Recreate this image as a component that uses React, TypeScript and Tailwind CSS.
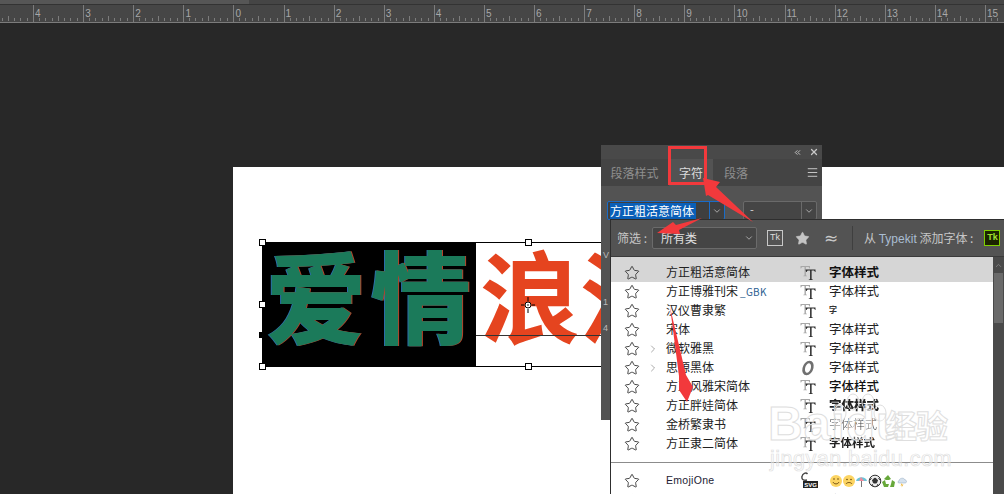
import { Star, ChevronDown, ChevronRight, ChevronUp, X, ChevronsLeft, Menu } from "lucide-react";

const cjk = "font-['Noto_Sans_CJK_SC','Noto_Sans',sans-serif]";
const rulerLabels = ["", "4", "3", "2", "1", "0", "1", "2", "3", "4", "5", "6", "7", "8", "9", "10", "11", "12", "13", "14", "15"];

const fonts = [
  { name: "方正粗活意简体", sample: "字体样式", cls: "text-[12.5px] font-bold text-[#111]" },
  { name: "方正博雅刊宋", tag: "_GBK", sample: "字体样式", cls: "text-[12.5px] text-[#222]" },
  { name: "汉仪曹隶繁", sample: "字", cls: "text-[8px] font-bold text-[#333]" },
  { name: "宋体", sample: "字体样式", cls: "text-[12.5px] text-[#222]" },
  { name: "微软雅黑", sample: "字体样式", cls: "text-[12.5px] text-[#222]", more: true },
  { name: "思源黑体", sample: "字体样式", cls: "text-[12.5px] text-[#222]", more: true, icon: "o" },
  { name: "方正风雅宋简体", sample: "字体样式", cls: "text-[12.5px] font-medium text-[#111]" },
  { name: "方正胖娃简体", sample: "字体样式", cls: "text-[12.5px] font-black text-[#222] blur-[0.7px]" },
  { name: "金桥繁隶书", sample: "字体样式", cls: "text-[12px] font-light text-[#444] blur-[0.4px]" },
  { name: "方正隶二简体", sample: "字体样式", cls: "text-[11.5px] font-bold text-[#222] blur-[0.3px]" },
];

const RulerCell = ({ label }: { label: string }) => (
  <div className="relative h-full w-[50.1px] shrink-0">
    <svg width="50" height="17" className="absolute left-0 top-0">
      <line x1="0.5" y1="0" x2="0.5" y2="17" stroke="#7c7c7c" />
      {[6, 12, 19, 25, 31, 37, 44].map((x) => (
        <line key={x} x1={x + 0.5} y1={x === 25 ? 11 : 13} x2={x + 0.5} y2="16" stroke="#7c7c7c" />
      ))}
    </svg>
    <span className="absolute left-[2px] top-[3px] font-['Liberation_Sans',sans-serif] text-[10px] leading-[12px] text-[#a8a8a8]">
      {label}
    </span>
  </div>
);

const TtIcon = () => (
  <svg width="16" height="16" viewBox="0 0 16 16" className="shrink-0">
    <path d="M0.5 1h9.500v2.500h-.5c-.2-.9-.6-1.500-1.800-1.500H5.900v8.500l1.100.3v.4H3.300v-.4l1.200-.3V2H3c-1.200 0-1.700.6-1.900 1.500H.5z" fill="#a8a8a8" />
    <path d="M5.500 4.500h10v2.500H15c-.2-.9-.6-1.500-1.800-1.500h-1.600v8.800l1.200.3v.4H8.800v-.4l1.300-.3V5.500H8.500c-1.200 0-1.700.6-1.900 1.500h-.6z" fill="#2a2a2a" />
  </svg>
);

const OIcon = () => (
  <svg width="16" height="16" viewBox="0 0 16 16" className="shrink-0">
    <ellipse cx="8" cy="8" rx="4.200" ry="6" transform="skewX(-12) translate(1.700 0)" fill="none" stroke="#707070" strokeWidth="2.600" />
  </svg>
);

const SvgIcon = () => (
  <svg width="18" height="17" viewBox="0 0 18 17" className="shrink-0">
    <path d="M7 8C3 9 1.500 7 2 4.500 2.500 1.500 6 0 7.500 2" fill="none" stroke="#444" strokeWidth="1.400" />
    <rect x="3" y="9" width="15" height="7" fill="#222" />
    <text x="10.500" y="15" textAnchor="middle" fontSize="6" fontWeight="700" fill="#fff" fontFamily="Liberation Sans, sans-serif">SVG</text>
  </svg>
);

const Emojis = () => (
  <svg width="78" height="14" viewBox="0 0 78 14">
    <circle cx="7" cy="7" r="6" fill="#fcd462" />
    <path d="M4 8c1 2.500 5 2.500 6 0" fill="none" stroke="#6b4a10" strokeWidth="0.900" />
    <circle cx="5" cy="5" r="0.800" fill="#6b4a10" />
    <circle cx="9" cy="5" r="0.800" fill="#6b4a10" />
    <circle cx="20" cy="7" r="6" fill="#fcd462" />
    <path d="M17 10c1-2 5-2 6 0" fill="none" stroke="#6b4a10" strokeWidth="0.900" />
    <circle cx="18" cy="5.500" r="0.800" fill="#6b4a10" />
    <circle cx="22" cy="5.500" r="0.800" fill="#6b4a10" />
    <path d="M27 7c1-5 10-5 11 0z" fill="#6cc4d8" />
    <path d="M32 3l3 4h-5z" fill="#f08a9c" />
    <path d="M32.500 7v6" stroke="#777" />
    <circle cx="46" cy="7" r="5.800" fill="#eee" stroke="#333" strokeWidth="1" />
    <path d="M46 4l2.500 2-1 3h-3l-1-3zM41 6l1.500-2M51 6l-1.500-2M44 12l-1-2M48 12l1-2" fill="#333" stroke="#333" />
    <path d="M59 1l3 4-2 1h-3l-2-1zM53 8l3-2 1 4 3 0-1 3h-4zM66 8l-3-2-1 4-1 3h4z" fill="#67a83a" />
    <path d="M70 7c0-3 5-4 6-1 2 0 2 3 0 3h-6c-1.500 0-1.500-2 0-2z" fill="#d6e2ee" stroke="#8fa6bf" strokeWidth="0.500" />
    <path d="M73 9l-1.500 2.500h1.500l-.5 2 2-3h-1.500z" fill="#f0b83c" />
  </svg>
);

const FontRow = ({ font, first }: { font: (typeof fonts)[number]; first: boolean }) => (
  <div className={`flex items-center ${first ? "h-[25px] bg-[#d6d6d6] pt-[6px]" : "h-[19px]"}`}>
    <Star size={16} strokeWidth={1.4} className="ml-[13px] shrink-0 text-[#3a3a3a]" />
    <div className="flex w-[26px] shrink-0 justify-end pr-[7px]">
      {font.more && <ChevronRight size={12} strokeWidth={1} className="text-[#555]" />}
    </div>
    <div className="-mt-[2px] w-[134px] shrink-0 text-[12px] leading-[19px] text-[#222]">
      {font.name}
      {font.tag && <span className="ml-[2px] text-[10px] tracking-[0.3px] text-[#2a5d8f]">{font.tag}</span>}
    </div>
    <div className="flex w-[29px] shrink-0">{font.icon === "o" ? <OIcon /> : <TtIcon />}</div>
    <div className={`-mt-[2px] leading-[19px] ${font.cls}`}>{font.sample}</div>
  </div>
);

export default function App() {
  return (
    <div className={`relative flex h-[494px] w-[1004px] flex-col overflow-hidden bg-[#282828] ${cjk}`}>
      <div className="flex h-[5px] shrink-0 border-b border-[#333]">
        <div className="w-[249px] bg-[#565656]" />
        <div className="flex-1 bg-[#454545]" />
      </div>
      <div className="flex h-[18px] shrink-0 overflow-hidden border-b border-[#7c7c7c] bg-[#464646] pl-0">
        <div className="-ml-[17px] flex">
          {rulerLabels.map((label, i) => (
            <RulerCell key={i} label={label} />
          ))}
        </div>
      </div>

      {/* document canvas */}
      <div className="mt-[144px] ml-[233px] flex-1 bg-white" />

      <div className="absolute left-[262px] top-[242px] flex h-[125px] w-[339px] overflow-hidden border-y border-black">
        <div className="h-full w-[214px] shrink-0 whitespace-nowrap bg-black pl-[4px] text-[100px] font-black leading-[100px] text-[#1b7a5a] [text-shadow:1px_0_#b5432a,-1px_0_#2b6ea8]">
          <span className="mr-[5px]">爱</span>
          <span>情</span>
        </div>
        <div className="h-full flex-1 whitespace-nowrap pl-[4px] text-[100px] font-bold leading-[100px] text-[#e5441f]">
          浪漫
        </div>
      </div>
      <div className="absolute left-[476px] top-[335px] h-px w-[125px] bg-[#333]" />
      {[
        [259, 239],
        [525, 239],
        [259, 301],
        [259, 363],
        [525, 363],
      ].map(([x, y]) => (
        <div
          key={`${x}-${y}`}
          className="absolute h-[7px] w-[7px] border border-black bg-white"
          style={{ left: x, top: y }}
        />
      ))}
      <div className="absolute left-[259px] top-[332px] h-[6px] w-[4px] bg-black" />
      <svg width="16" height="16" viewBox="0 0 16 16" className="absolute left-[520px] top-[297px]">
        <circle cx="8" cy="8" r="3" fill="#fff" stroke="#000" />
        <circle cx="8" cy="8" r="0.800" fill="#000" />
        <path d="M8 0v4M8 12v4M1 8h3M12 8h3" stroke="#000" />
      </svg>

      {/* character panel */}
      <div className="absolute left-[601px] top-[145px] flex h-[275px] w-[221px] flex-col rounded-t-[3px] bg-[#535353]">
        <div className="flex h-[14px] shrink-0 items-center justify-end gap-[7px] bg-[#494949] pr-[3px] text-[#c8c8c8]">
          <ChevronsLeft size={9} strokeWidth={2.500} />
          <X size={10} strokeWidth={3} />
        </div>
        <div className="flex h-[27px] shrink-0 items-center bg-[#444] text-[12px] text-[#8f8f8f]">
          <div className="flex h-full w-[67px] items-center justify-center">段落样式</div>
          <div className="ml-[1px] flex h-full w-[44px] items-center justify-center bg-[#535353] text-[#dcdcdc]">字符</div>
          <div className="ml-[1px] flex h-full w-[44px] items-center justify-center">段落</div>
          <div className="flex flex-1 justify-end pr-[3px]">
            <Menu size={13} strokeWidth={1.800} className="text-[#c8c8c8]" />
          </div>
        </div>
        <div className="mt-[15px] flex pl-[6px]">
          <div className="flex h-[19px] w-[118px] overflow-hidden rounded-[2px] border border-[#1a6cc8] bg-[#3f3f3f]">
            <div className="flex-1 pl-[2px] pt-px">
              <span className="block w-[86px] bg-[#0a5fb8] text-[12px] leading-[16px] text-white">方正粗活意简体</span>
            </div>
            <div className="flex w-[15px] items-center justify-center border-l border-[#1a6cc8]">
              <ChevronDown size={10} className="text-[#bbb]" />
            </div>
          </div>
          <div className="ml-[18px] flex h-[19px] w-[74px] rounded-[2px] border border-[#6a6a6a] bg-[#454545]">
            <div className="flex-1 pl-[6px] text-[11px] leading-[15px] text-[#ddd]">-</div>
            <div className="flex w-[15px] items-center justify-center border-l border-[#6a6a6a]">
              <ChevronDown size={10} className="text-[#bbb]" />
            </div>
          </div>
        </div>
        <div className="mt-[29px] flex flex-col pl-[2px] font-['Liberation_Sans',sans-serif] text-[9px] leading-[12px] text-[#bbb]">
          <span className="h-[47px]">V</span>
          <span className="h-[26px]">1</span>
          <span>4</span>
        </div>
      </div>

      {/* font list popup */}
      <div className="absolute left-[610px] top-[219px] flex h-[285px] w-[394px] flex-col border-l border-t border-[#2e2e2e] bg-[#535353]">
        <div className="flex h-[37px] shrink-0 items-center border-b border-[#3a3a3a] text-[12px] text-[#c6c6c6]">
          <span className="ml-[6px] w-[35px] shrink-0">筛选 :</span>
          <div className="flex h-[22px] w-[105px] shrink-0 items-center justify-between rounded-[2px] border border-[#6b6b6b] bg-[#454545] pl-[8px] pr-[2px] text-[#e0e0e0]">
            所有类
            <ChevronDown size={10} className="text-[#bbb]" />
          </div>
          <div className="ml-[10px] flex h-[16px] w-[16px] shrink-0 items-center justify-center border border-[#c8c8c8] font-['Liberation_Sans',sans-serif] text-[9px] text-[#ddd]">
            Tk
          </div>
          <Star size={15} strokeWidth={1} className="ml-[12px] shrink-0 fill-[#c4c4c4] text-[#c4c4c4]" />
          <span className="ml-[14px] w-[22px] shrink-0 font-['DejaVu_Sans',sans-serif] text-[17px] leading-none text-[#c8c8c8]">≈</span>
          <div className="ml-[6px] h-[24px] w-px shrink-0 bg-[#3f3f3f]" />
          <span className="ml-[11px] whitespace-nowrap">
            从 <span className="font-['Liberation_Sans',sans-serif] text-[#a9bdd2]">Typekit</span> 添加字体 :
          </span>
          <div className="ml-[11px] flex h-[16px] w-[16px] shrink-0 items-center justify-center border border-[#7fd000] bg-[#1b2400] font-['Liberation_Sans',sans-serif] text-[9px] font-bold text-[#9fe030]">
            Tk
          </div>
        </div>
        <div className="flex flex-1 overflow-hidden">
          <div className="w-[382px] shrink-0 bg-white">
            {fonts.map((font, i) => (
              <FontRow key={font.name} font={font} first={i === 0} />
            ))}
            <div className="mt-[9px] h-px bg-[#8c8c8c]" />
            <div className="mt-[8px] flex h-[19px] items-center">
              <Star size={16} strokeWidth={1.400} className="ml-[13px] shrink-0 text-[#3a3a3a]" />
              <div className="ml-[26px] w-[134px] shrink-0 font-['Liberation_Sans',sans-serif] text-[10.500px] tracking-[0.3px] text-[#223]">
                EmojiOne
              </div>
              <div className="flex w-[29px] shrink-0">
                <SvgIcon />
              </div>
              <Emojis />
            </div>
            <div className="flex h-[19px] items-center pt-[2px]">
              <Star size={16} strokeWidth={1.400} className="ml-[13px] shrink-0 text-[#3a3a3a]" />
              <div className="ml-[189px] text-[12.500px] font-bold text-[#222]">字体样式</div>
            </div>
          </div>
          <div className="flex flex-1 flex-col items-center bg-[#4a4a4a] pt-[4px]">
            <ChevronUp size={9} className="text-[#8a8a8a]" />
            <div className="mt-[3px] h-[50px] w-[9px] bg-[#6a6a6a]" />
          </div>
        </div>
      </div>

      {/* red annotations */}
      <div className="absolute left-[668px] top-[146px] h-[39px] w-[39px] border-[3px] border-[#f2393c]" />
      <svg width="1004" height="494" className="absolute left-0 top-0">
        <path d="M703 178L720 182L716 187L753 222L708 195L706 196z" fill="#f2393c" />
        <path d="M657 233L673 222L676 225L702 218L679 230L680 234z" fill="#f2393c" />
        <path d="M670 307L686 375L693 387L687 402L679 390L679 376z" fill="#f2393c" />
      </svg>

      {/* watermark */}
      <svg width="60" height="34" viewBox="0 0 60 34" className="absolute left-[828px] top-[393px]" fill="none" stroke="#dedede">
        <ellipse cx="12" cy="20" rx="6" ry="8" />
        <ellipse cx="25" cy="9" rx="6" ry="8" />
        <ellipse cx="40" cy="9" rx="6" ry="8" />
        <ellipse cx="52" cy="20" rx="6" ry="8" />
      </svg>
      <div className="absolute left-[768px] top-[398px] font-['Liberation_Sans',sans-serif] text-[48px] font-bold leading-[52px] tracking-[1px] text-white/30 [-webkit-text-stroke:1px_#dedede]">
        Baidu
      </div>
      <div className={`absolute left-[885px] top-[404px] text-[32px] font-bold leading-[40px] tracking-[-1px] text-white/30 [-webkit-text-stroke:1px_#dedede] ${cjk}`}>
        经验
      </div>
      <div className="absolute left-[770px] top-[447px] font-['Liberation_Sans',sans-serif] text-[21.500px] leading-[24px] tracking-[0.5px] text-white/30 [-webkit-text-stroke:0.7px_#dedede]">
        jingyan.baidu.com
      </div>
    </div>
  );
}
